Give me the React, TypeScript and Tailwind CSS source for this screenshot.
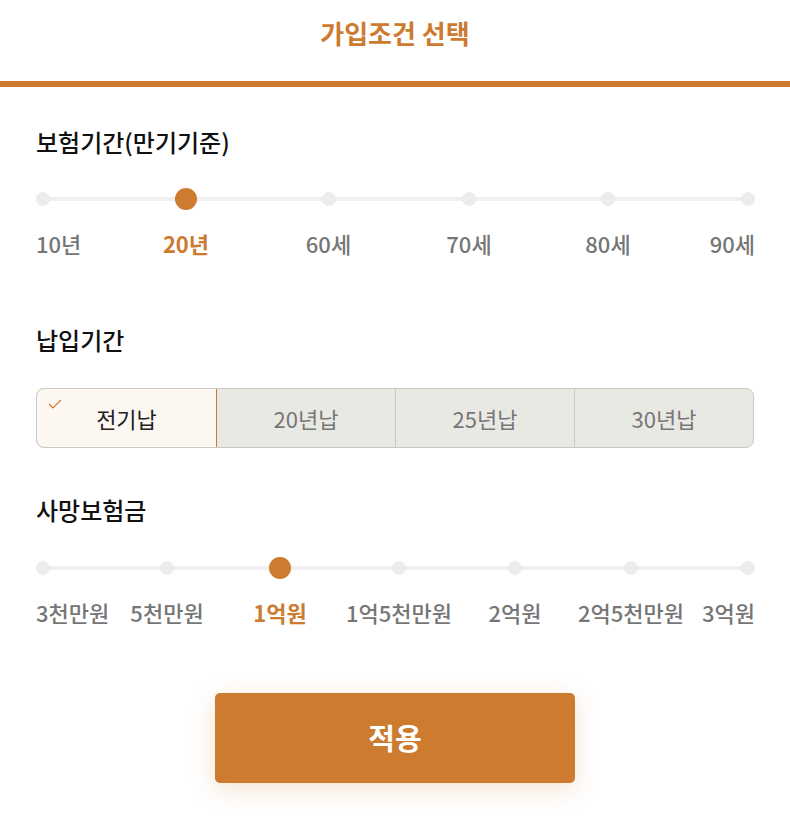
import React from "react";

type Stop = { label: string };

function Scale({
  stops,
  active,
  cols,
}: {
  stops: Stop[];
  active: number;
  cols: string;
}) {
  const last = stops.length - 1;
  return (
    <div
      className={
        "grid w-full bg-[linear-gradient(#efefef,#efefef)] bg-[length:705px_4px] bg-[position:6px_9px] bg-no-repeat " +
        cols
      }
    >
      {stops.map((s, i) => (
        <div
          key={s.label}
          className={
            "flex flex-col gap-[19px] " +
            (i === 0 ? "items-start" : i === last ? "items-end" : "items-center")
          }
        >
          <div className="flex h-[22px] items-center">
            {i === active ? (
              <div className="h-[22px] w-[22px] rounded-full bg-[#cc7b2f]" />
            ) : (
              <div className="h-[14px] w-[14px] rounded-full bg-[#ececec]" />
            )}
          </div>
          <span
            className={
              "whitespace-nowrap text-[22px] leading-[28px] " +
              (i === active ? "font-bold text-[#cc7b2f]" : "font-medium text-[#767676]")
            }
          >
            {s.label}
          </span>
        </div>
      ))}
    </div>
  );
}

const period: Stop[] = ["10년", "20년", "60세", "70세", "80세", "90세"].map((label) => ({ label }));
const amount: Stop[] = ["3천만원", "5천만원", "1억원", "1억5천만원", "2억원", "2억5천만원", "3억원"].map(
  (label) => ({ label })
);

function Title({ children, className }: { children: React.ReactNode; className: string }) {
  return (
    <h2 className={"text-[24px] font-medium leading-[32px] text-[#111] " + className}>{children}</h2>
  );
}

export default function App() {
  const segs = ["전기납", "20년납", "25년납", "30년납"];
  return (
    <div
      className="h-[818px] w-[790px] overflow-hidden bg-white"
      style={{ fontFamily: '"Noto Sans CJK KR", "Noto Sans", sans-serif' }}
    >
      <header className="h-[81px] pt-[17px] text-center">
        <span className="text-[26px] font-bold leading-[32px] text-[#cc7b2f]">가입조건 선택</span>
      </header>
      <div className="h-[6px] bg-[#cc7b2f]" />
      <main className="flex flex-col px-[36px]">
        <Title className="mt-[39px]">보험기간(만기기준)</Title>
        <div className="mt-[30px]">
          <Scale stops={period} active={1} cols="grid-cols-[78px_144px_141px_140px_138px_78px]" />
        </div>

        <Title className="mt-[67px]">납입기간</Title>
        <div className="mt-[32px] flex h-[60px] w-full overflow-hidden rounded-[8px] border border-[#c9c9c5] bg-[#e9e9e4]">
          {segs.map((s, i) =>
            i === 0 ? (
              <div
                key={s}
                className="relative -my-px -ml-px flex w-[181px] items-center justify-center rounded-l-[8px] border border-[#cc7b2f] bg-[#fcf7f1] text-[22px] leading-none text-[#222]"
              >
                <svg
                  className="absolute left-[11px] top-[10px]"
                  width="14"
                  height="10"
                  viewBox="0 0 14 10"
                  fill="none"
                >
                  <path d="M1 5 L5 9 L13 1" stroke="#cc7b2f" strokeWidth="1.1" />
                </svg>
                {s}
              </div>
            ) : (
              <div
                key={s}
                className={
                  "flex flex-1 items-center justify-center text-[22px] leading-none text-[#777] " +
                  (i > 1 ? "border-l border-[#c9c9c5]" : "")
                }
              >
                {s}
              </div>
            )
          )}
        </div>

        <Title className="mt-[46px]">사망보험금</Title>
        <div className="mt-[31px]">
          <Scale
            stops={amount}
            active={2}
            cols="grid-cols-[70px_122px_104px_134px_98px_134px_57px]"
          />
        </div>

        <div className="mt-[67px] flex justify-center">
          <button className="flex h-[90px] w-[360px] items-center justify-center rounded-[5px] bg-[#cc7b2f] text-[29px] font-bold text-white shadow-[0_6px_24px_rgba(204,123,47,0.22)]">
            적용
          </button>
        </div>
      </main>
    </div>
  );
}
